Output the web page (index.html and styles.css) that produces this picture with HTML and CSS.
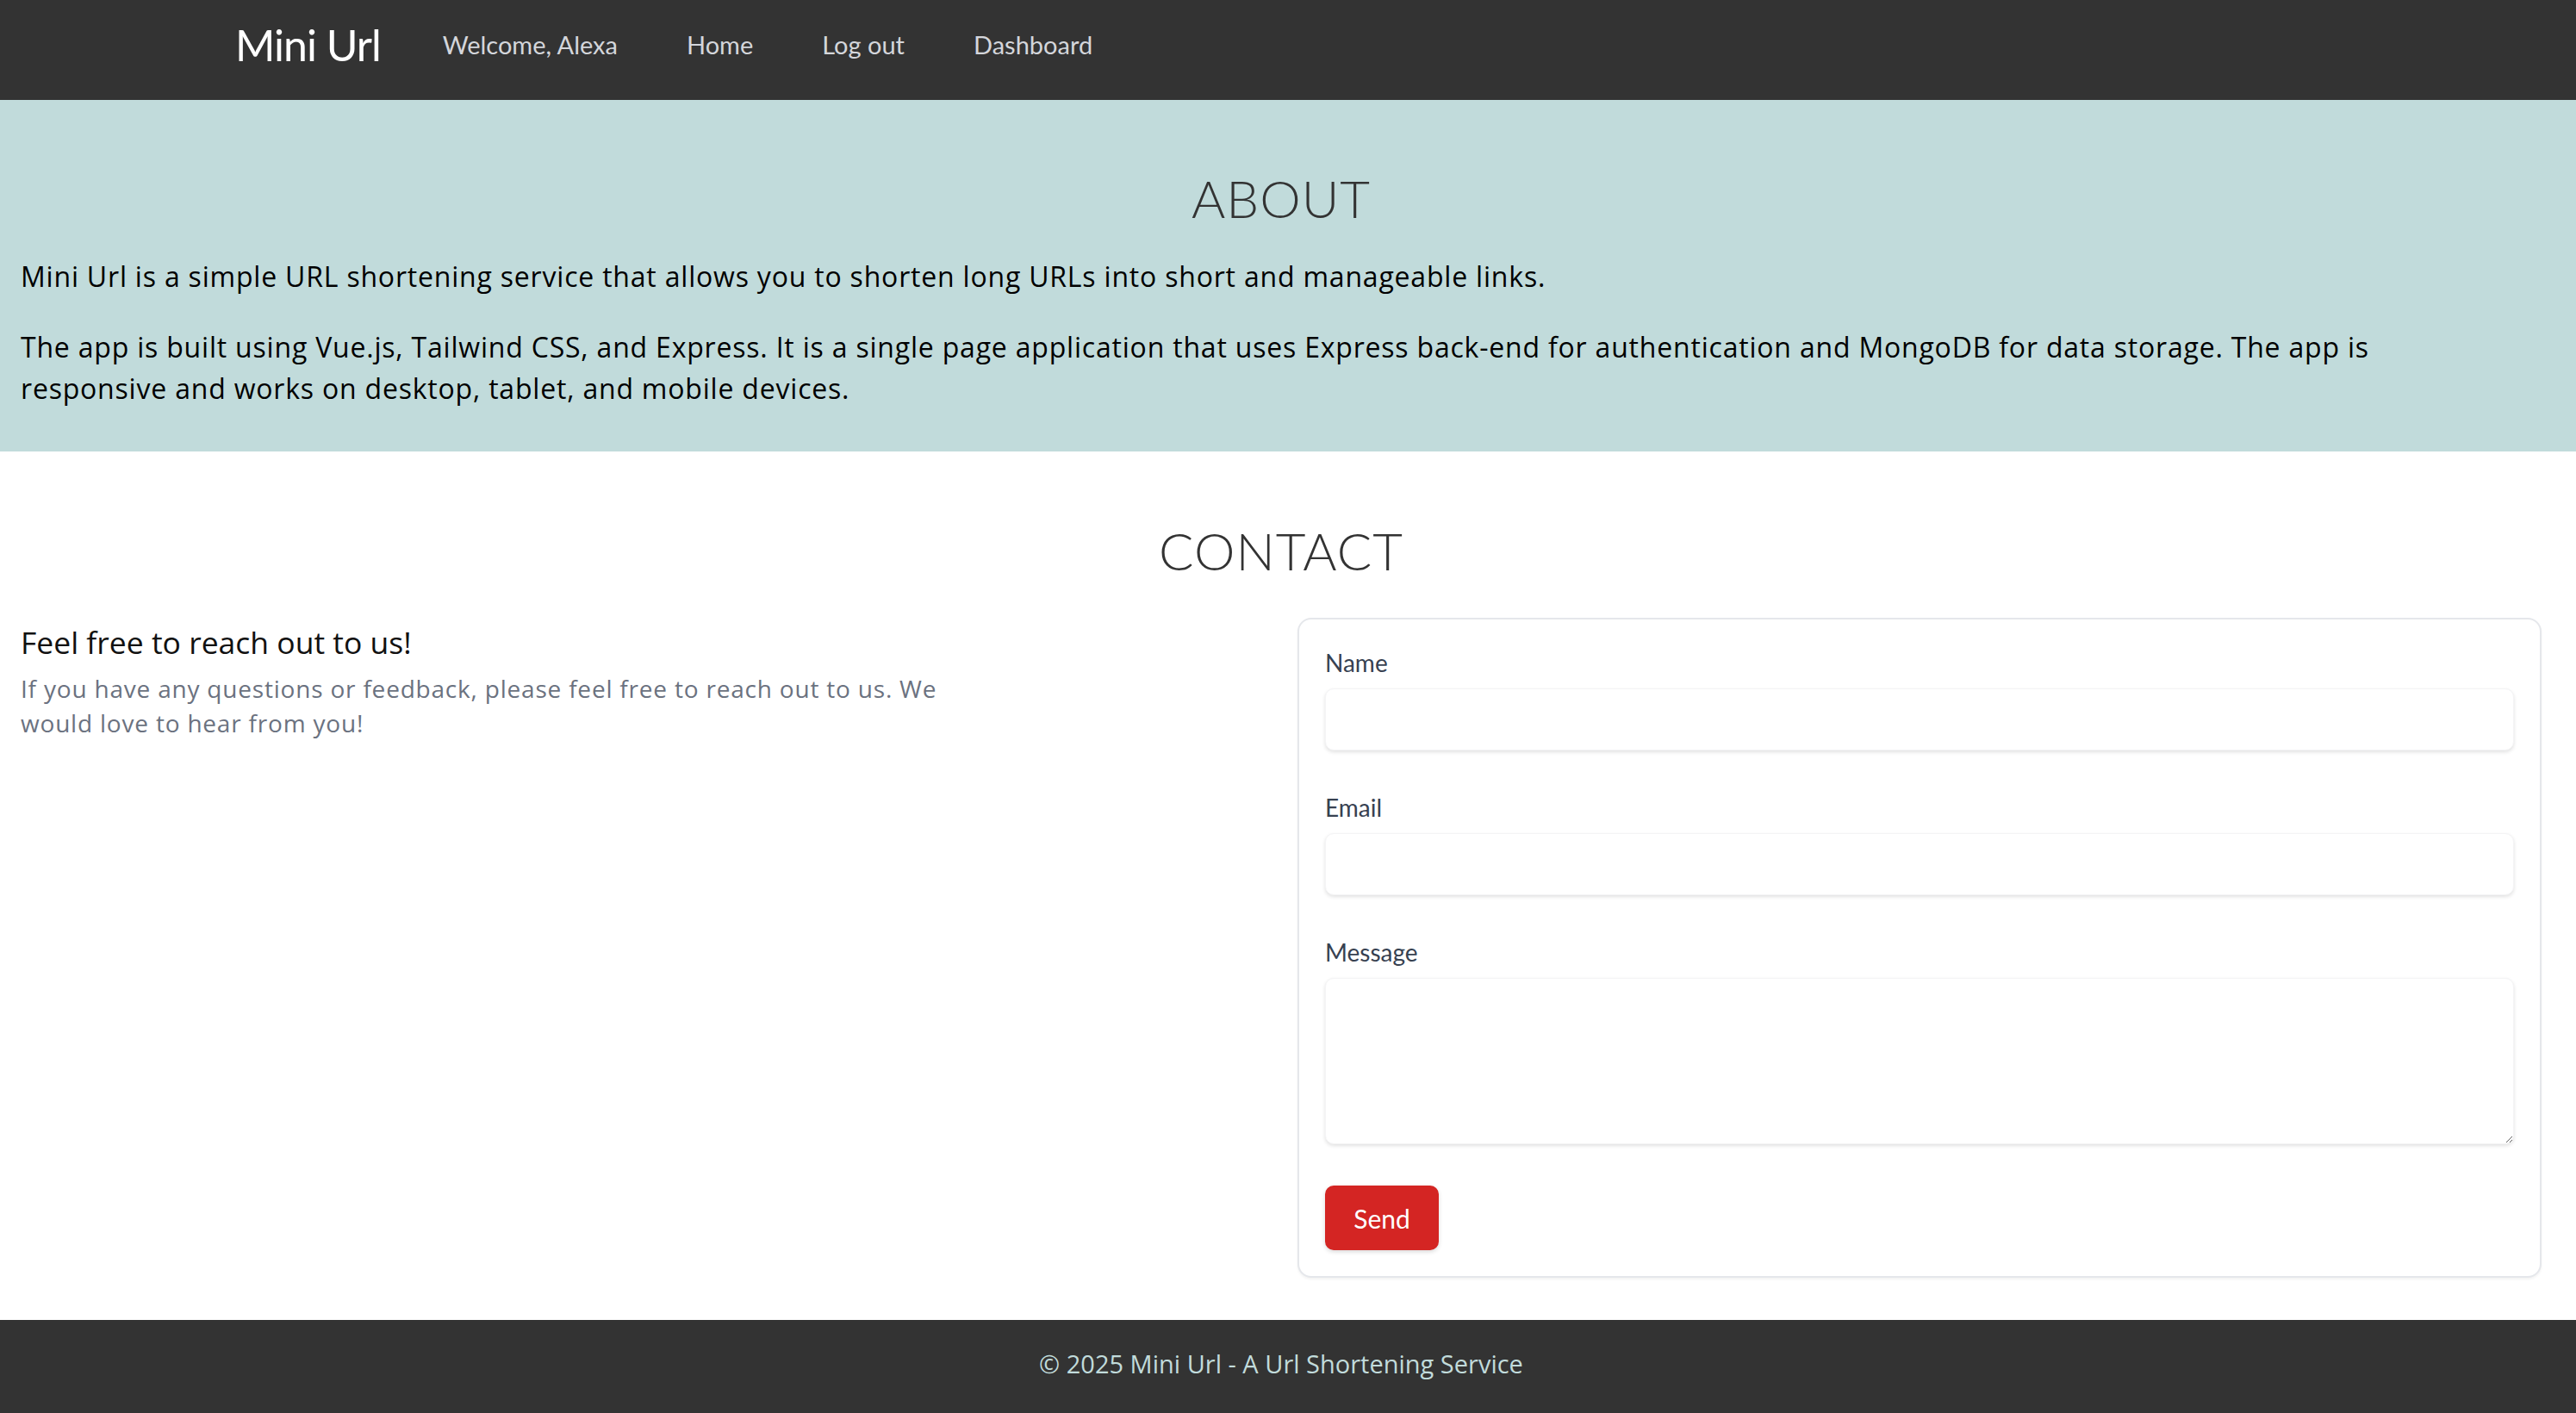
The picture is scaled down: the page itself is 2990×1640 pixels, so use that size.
FILE: index.html
```html
<!DOCTYPE html>
<html lang="en">
<head>
<meta charset="utf-8">
<title>Mini Url - About</title>
<link rel="stylesheet" href="styles.css">
</head>
<body>
<header class="topbar">
  <a class="brand" href="#">Mini Url</a>
  <nav class="nav-links">
    <span class="nav-item">Welcome, Alexa</span>
    <a class="nav-item" href="#">Home</a>
    <a class="nav-item" href="#">Log out</a>
    <a class="nav-item" href="#">Dashboard</a>
  </nav>
</header>
<main class="main">
  <section class="about">
    <h1 class="section-title">ABOUT</h1>
    <p class="about-text">Mini Url is a simple URL shortening service that allows you to shorten long URLs into short and manageable links.</p>
    <p class="about-text">The app is built using Vue.js, Tailwind CSS, and Express. It is a single page application that uses Express back-end for authentication and MongoDB for data storage. The app is responsive and works on desktop, tablet, and mobile devices.</p>
  </section>
  <section class="contact">
    <h2 class="section-title">CONTACT</h2>
    <div class="contact-grid">
      <div class="contact-intro">
        <h3 class="intro-title">Feel free to reach out to us!</h3>
        <p class="intro-text">If you have any questions or feedback, please feel free to reach out to us. We would love to hear from you!</p>
      </div>
      <form class="contact-card">
        <div class="field">
          <label class="field-label" for="name">Name</label>
          <input class="field-input" id="name" type="text">
        </div>
        <div class="field">
          <label class="field-label" for="email">Email</label>
          <input class="field-input" id="email" type="email">
        </div>
        <div class="field field-last">
          <label class="field-label" for="message">Message</label>
          <textarea class="field-input field-textarea" id="message"></textarea>
        </div>
        <button class="send-btn" type="button">Send</button>
      </form>
    </div>
  </section>
</main>
<footer class="footer">
  <p class="footer-text">© 2025 Mini Url - A Url Shortening Service</p>
</footer>
</body>
</html>
```
FILE: styles.css
```css
* { box-sizing: border-box; }

html, body {
  margin: 0;
  padding: 0;
}

body {
  min-height: 100vh;
  display: flex;
  flex-direction: column;
  background: #ffffff;
  font-family: "Open Sans", "Noto Sans", sans-serif;
  color: #111111;
}

/* ---------- top bar ---------- */
.topbar {
  height: 116px;
  background: #333333;
  display: flex;
  align-items: center;
  padding: 0 0 12px 273px;
  gap: 72px;
}

.brand {
  font-family: "Lato", "Noto Sans", sans-serif;
  font-size: 50px;
  letter-spacing: -1px;
  color: #ffffff;
  text-decoration: none;
  line-height: 1.2;
}

.nav-links {
  display: flex;
  align-items: center;
  gap: 80px;
}

.nav-item {
  font-family: "Lato", "Noto Sans", sans-serif;
  font-size: 29px;
  color: #d4d6db;
  text-decoration: none;
  line-height: 1.2;
}

/* ---------- main ---------- */
.main {
  flex: 1;
  display: flex;
  flex-direction: column;
}

.section-title {
  margin: 0;
  text-align: center;
  font-family: "Lato", "Noto Sans", sans-serif;
  font-weight: 300;
  font-size: 60px;
  line-height: 72px;
  color: #333333;
  letter-spacing: 1px;
}

.about {
  background: #c1dbdb;
  padding: 78px 40px 49px 24px;
}

.about .section-title {
  margin-bottom: 31px;
}

.about-text {
  margin: 0 0 34px;
  max-width: 2800px;
  font-size: 32px;
  letter-spacing: 0.8px;
  line-height: 48px;
  color: #000000;
}

.about-text:last-child {
  margin-bottom: 0;
}

/* ---------- contact ---------- */
.contact {
  flex: 1;
  padding: 79px 40px 48px 24px;
}

.contact .section-title {
  margin-bottom: 42px;
}

.contact-grid {
  display: grid;
  grid-template-columns: 1fr 1fr;
  column-gap: 38px;
  align-items: start;
}

.contact-intro {
  max-width: 1152px;
}

.intro-title {
  margin: 0 0 6px;
  font-weight: 400;
  font-size: 35.5px;
  line-height: 56px;
  color: #111111;
}

.intro-text {
  margin: 0;
  font-size: 28px;
  letter-spacing: 0.8px;
  line-height: 40px;
  color: #6b7280;
}

.contact-card {
  border: 2px solid #e5e7eb;
  border-radius: 16px;
  padding: 30px;
  background: #ffffff;
  box-shadow: 0 2px 3px rgba(0, 0, 0, 0.05);
  display: flex;
  flex-direction: column;
  align-items: flex-start;
}

.field {
  width: 100%;
  display: flex;
  flex-direction: column;
  margin-bottom: 46px;
}

.field-last {
  margin-bottom: 48px;
}

.field-label {
  font-family: "Lato", "Noto Sans", sans-serif;
  font-size: 28px;
  line-height: 40px;
  color: #374151;
  margin-bottom: 10px;
}

.field-input {
  width: 100%;
  height: 72px;
  border: 1px solid #f4f4f5;
  border-radius: 10px;
  background: #ffffff;
  box-shadow: 0 2px 4px rgba(0, 0, 0, 0.12);
  font-size: 28px;
  padding: 0 20px;
  outline: none;
}

.field-textarea {
  height: 193px;
  padding: 16px 20px;
  resize: vertical;
  font-family: inherit;
}

.send-btn {
  height: 75px;
  width: 132px;
  background: #d42523;
  color: #ffffff;
  border: none;
  border-radius: 10px;
  font-family: "Lato", "Noto Sans", sans-serif;
  font-size: 30px;
  box-shadow: 0 2px 5px rgba(0, 0, 0, 0.15);
  cursor: pointer;
}

/* ---------- footer ---------- */
.footer {
  height: 108px;
  background: #333333;
  display: flex;
  align-items: center;
  justify-content: center;
  padding: 0 40px 6px 24px;
}

.footer-text {
  margin: 0;
  font-size: 29px;
  line-height: 40px;
  color: #c1dbdb;
}
```
